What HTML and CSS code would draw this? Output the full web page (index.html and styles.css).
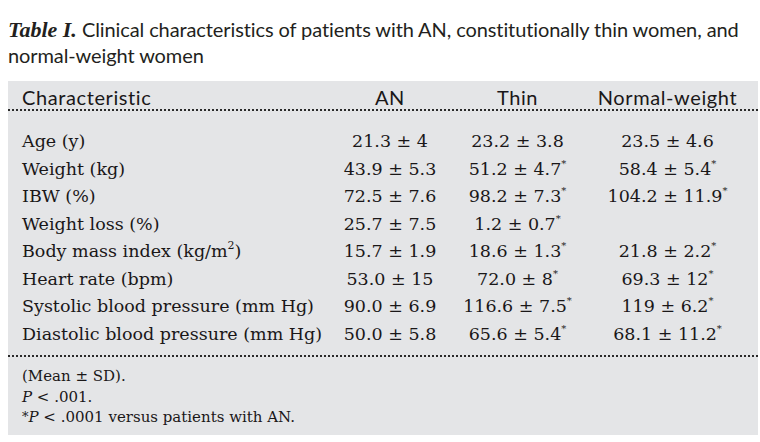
FILE: index.html
```html
<!DOCTYPE html>
<html>
<head>
<meta charset="utf-8">
<link rel="stylesheet" href="styles.css">
</head>
<body>
<div class="page">
  <div class="caption">
    <div class="cap-line"><span class="label">Table I.</span> <span>Clinical characteristics of patients with AN, constitutionally thin women, and</span></div>
    <div class="cap-line">normal-weight women</div>
  </div>
  <div class="box">
    <div class="head">
      <span class="c-label">Characteristic</span>
      <span class="c-val">AN</span>
      <span class="c-val">Thin</span>
      <span class="c-val">Normal-weight</span>
    </div>
    <div class="body">
      <div class="row"><span class="c-label">Age (y)</span><span class="c-val">21.3 ± 4</span><span class="c-val">23.2 ± 3.8</span><span class="c-val">23.5 ± 4.6</span></div>
      <div class="row"><span class="c-label">Weight (kg)</span><span class="c-val">43.9 ± 5.3</span><span class="c-val">51.2 ± 4.7<sup class="ast">*</sup></span><span class="c-val">58.4 ± 5.4<sup class="ast">*</sup></span></div>
      <div class="row"><span class="c-label">IBW (%)</span><span class="c-val">72.5 ± 7.6</span><span class="c-val">98.2 ± 7.3<sup class="ast">*</sup></span><span class="c-val">104.2 ± 11.9<sup class="ast">*</sup></span></div>
      <div class="row"><span class="c-label">Weight loss (%)</span><span class="c-val">25.7 ± 7.5</span><span class="c-val">1.2 ± 0.7<sup class="ast">*</sup></span><span class="c-val"></span></div>
      <div class="row"><span class="c-label">Body mass index (kg/m<sup class="sq">2</sup>)</span><span class="c-val">15.7 ± 1.9</span><span class="c-val">18.6 ± 1.3<sup class="ast">*</sup></span><span class="c-val">21.8 ± 2.2<sup class="ast">*</sup></span></div>
      <div class="row"><span class="c-label">Heart rate (bpm)</span><span class="c-val">53.0 ± 15</span><span class="c-val">72.0 ± 8<sup class="ast">*</sup></span><span class="c-val">69.3 ± 12<sup class="ast">*</sup></span></div>
      <div class="row"><span class="c-label">Systolic blood pressure (mm Hg)</span><span class="c-val">90.0 ± 6.9</span><span class="c-val">116.6 ± 7.5<sup class="ast">*</sup></span><span class="c-val">119 ± 6.2<sup class="ast">*</sup></span></div>
      <div class="row"><span class="c-label">Diastolic blood pressure (mm Hg)</span><span class="c-val">50.0 ± 5.8</span><span class="c-val">65.6 ± 5.4<sup class="ast">*</sup></span><span class="c-val">68.1 ± 11.2<sup class="ast">*</sup></span></div>
    </div>
    <div class="notes">
      <div>(Mean ± SD).</div>
      <div><i>P</i> &lt; .001.</div>
      <div><span class="nast">*</span><i>P</i> &lt; .0001 versus patients with AN.</div>
    </div>
  </div>
</div>
</body>
</html>
```
FILE: styles.css
```css
html, body {
  margin: 0;
  padding: 0;
  background: #ffffff;
}
.page {
  padding: 8px 2px 0 8px;
}
.caption {
  font-family: "Lato", "Open Sans", sans-serif;
  font-size: 20px;
  letter-spacing: -0.1px;
  color: #231f20;
  padding-top: 8px;
}
.cap-line {
  height: 26px;
  line-height: 26px;
  white-space: nowrap;
}
.caption .label {
  font-family: "Liberation Serif", serif;
  font-weight: bold;
  font-style: italic;
  font-size: 22px;
  line-height: 20px;
  letter-spacing: 0;
}
.box {
  margin-top: 13px;
  background: #e4e5e7;
  height: 354px;
  color: #1a1718;
}
.head, .row {
  display: grid;
  grid-template-columns: 308px 120px 135px 165px;
  padding-left: 14px;
}
.head {
  font-family: "Lato", "Open Sans", sans-serif;
  font-size: 20px;
  letter-spacing: 0.6px;
  line-height: 24px;
  padding-top: 4px;
  border-bottom: 2px dotted #2a2a2a;
}
.c-val {
  text-align: center;
  white-space: nowrap;
}
.body {
  padding-top: 17px;
  padding-bottom: 7px;
  border-bottom: 2px dotted #2a2a2a;
  font-family: "DejaVu Serif", serif;
  font-size: 17.5px;
}
.row {
  line-height: 27.5px;
}
.ast {
  font-size: 10px;
  line-height: 0;
  vertical-align: 8px;
}
.sq {
  font-size: 11px;
  line-height: 0;
  vertical-align: 8px;
}
.notes {
  padding: 9px 0 0 14px;
  font-family: "DejaVu Serif", serif;
  font-size: 15px;
  line-height: 20.5px;
}
.nast {
  font-size: 13px;
  vertical-align: 1px;
}
```
